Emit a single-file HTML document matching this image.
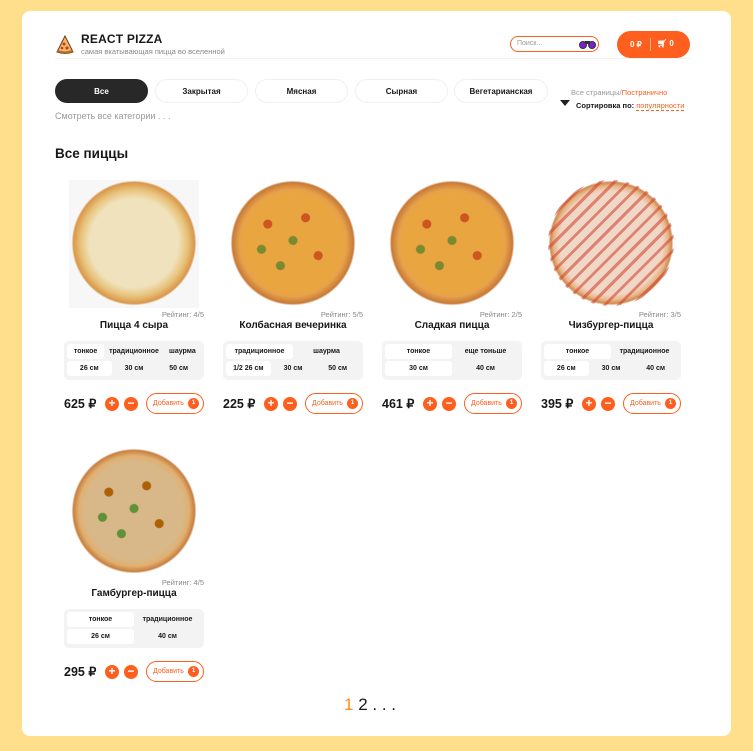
<!DOCTYPE html>
<html><head><meta charset="utf-8"><style>
*{box-sizing:border-box;margin:0;padding:0}
body{width:753px;height:751px;background:#ffdf8c;font-family:"Liberation Sans",sans-serif;position:relative;overflow:hidden;color:#181818}
.panel{position:absolute;left:22px;top:11px;width:709px;height:725px;background:#fff;border-radius:8px}
.a{position:absolute}
.cat{position:absolute;top:79px;height:24px;border:1px solid #f0f0f0;border-radius:12px;font-size:8px;font-weight:bold;display:flex;align-items:center;justify-content:center}
.card{position:absolute;width:140px}
.piz{position:absolute;left:7px;top:0;width:126px;height:126px;border-radius:50%}
.dots{background-image:radial-gradient(circle at 30% 35%,#c52 0 4px,transparent 5px),radial-gradient(circle at 60% 30%,#c52 0 4px,transparent 5px),radial-gradient(circle at 70% 60%,#c52 0 4px,transparent 5px),radial-gradient(circle at 40% 68%,#7a8a30 0 4px,transparent 5px),radial-gradient(circle at 50% 48%,#7a8a30 0 4px,transparent 5px),radial-gradient(circle at 25% 55%,#7a8a30 0 4px,transparent 5px)}
.rt{position:absolute;right:0;top:130px;font-size:7.5px;color:#888}
.nm{position:absolute;left:-10px;right:-10px;top:140px;text-align:center;font-size:10px;font-weight:bold}
.opt{position:absolute;left:0;top:161px;width:140px;height:39px;background:#f3f3f3;border-radius:5px;padding:3px}
.row{display:flex;height:15px;margin-bottom:2px}
.row div{flex:1;font-size:7px;font-weight:bold;display:flex;align-items:center;justify-content:center;border-radius:3px;white-space:nowrap}
.row .s{background:#fff}
.pr{position:absolute;left:0;top:216px;font-size:12.5px;font-weight:bold}
.pl{position:absolute;top:217px;width:14px;height:14px;border-radius:50%;background:#fe5f1e;color:#fff;font-size:12px;font-weight:bold;line-height:13px;text-align:center}
.add{position:absolute;left:82px;top:213px;width:58px;height:21px;border:1px solid #fe5f1e;border-radius:11px;font-size:7px;color:#fe5f1e;padding-left:6px;line-height:19px}
.add i{position:absolute;right:4px;top:4px;width:11px;height:11px;border-radius:50%;background:#fe5f1e;color:#fff;font-style:normal;font-size:6px;text-align:center;line-height:11px;font-weight:bold}
</style></head><body>
<div class="panel"></div>
<svg class="a" style="left:55px;top:35px" width="20" height="20" viewBox="0 0 20 20"><path d="M10 1 L2 17 Q10 20 18 17 Z" fill="#f3b95f" stroke="#6b3d1a" stroke-width="1"/><path d="M2 17 Q10 20 18 17 L17 15 Q10 18 3 15Z" fill="#b06b2c"/><circle cx="9" cy="9" r="1.5" fill="#c33"/><circle cx="12" cy="13" r="1.5" fill="#c33"/><circle cx="7" cy="13" r="1.3" fill="#c33"/></svg>
<div class="a" style="left:81px;top:32px;font-size:12px;font-weight:900;letter-spacing:0.2px">REACT PIZZA</div>
<div class="a" style="left:81px;top:47px;font-size:7.5px;color:#888">самая вкатывающая пицца во вселенной</div>
<div class="a" style="left:55px;top:58px;width:636px;height:1px;background:#f3f3f3"></div>
<div class="a" style="left:510px;top:36px;width:89px;height:16px;border:1px solid #fe5f1e;border-radius:8px;font-size:7px;color:#999;padding:3px 6px">Поиск...</div>
<svg class="a" style="left:579px;top:39px" width="17" height="10" viewBox="0 0 17 10"><circle cx="4" cy="6" r="3.5" fill="#7a1fd1" stroke="#333"/><circle cx="13" cy="6" r="3.5" fill="#7a1fd1" stroke="#333"/><rect x="6" y="2" width="5" height="3" fill="#333"/></svg>
<div class="a" style="left:617px;top:31px;width:73px;height:27px;background:#fe5f1e;border-radius:14px;color:#fff;font-size:8px;font-weight:bold"><span class="a" style="left:13px;top:9px">0 ₽</span><span class="a" style="left:33px;top:7px;width:1px;height:13px;background:#ffffff80"></span><span class="a" style="left:40px;top:8px">🛒︎ 0</span></div>
<div class="cat" style="left:55px;width:93px;background:#282828;color:#fff;border-color:#282828">Все</div>
<div class="cat" style="left:155px;width:93px">Закрытая</div>
<div class="cat" style="left:255px;width:93px">Мясная</div>
<div class="cat" style="left:355px;width:93px">Сырная</div>
<div class="cat" style="left:454px;width:94px">Вегетарианская</div>
<div class="a" style="left:55px;top:111px;font-size:9px;color:#999">Смотреть все категории . . .</div>
<div class="a" style="left:571px;top:88px;font-size:7.5px;color:#999">Все страницы/<span style="color:#fe5f1e">Постранично</span></div>
<div class="a" style="left:560px;top:100px;width:0;height:0;border-left:5px solid transparent;border-right:5px solid transparent;border-top:6px solid #222"></div>
<div class="a" style="left:576px;top:101px;font-size:7.5px;font-weight:bold">Сортировка по: <span style="color:#fe5f1e;font-weight:normal;border-bottom:1px dashed #fe5f1e">популярности</span></div>
<div class="a" style="left:55px;top:146px;font-size:13.5px;font-weight:bold">Все пиццы</div>

<div class="card" style="left:64px;top:180px">
<div class="a" style="left:5px;top:0;width:130px;height:128px;background:#f7f7f7"></div>
<div class="piz" style="background:radial-gradient(circle,#f0e2bc 0 50%,#e8c27a 60%,#d9974a 68%,#f7f7f7 70%)"></div>
<div class="rt">Рейтинг: 4/5</div><div class="nm">Пицца 4 сыра</div>
<div class="opt"><div class="row"><div class="s">тонкое</div><div style="flex:1.6">традиционное</div><div>шаурма</div></div><div class="row"><div class="s">26 см</div><div>30 см</div><div>50 см</div></div></div>
<div class="pr">625 ₽</div><div class="pl" style="left:41px">+</div><div class="pl" style="left:60px">−</div><div class="add">Добавить<i>1</i></div></div>

<div class="card" style="left:223px;top:180px">
<div class="piz" style="background:radial-gradient(circle,#e9a640 0 55%,#e8a24a 60%,#c77a38 68%,#fff 70%)"></div><div class="piz dots"></div>
<div class="rt">Рейтинг: 5/5</div><div class="nm">Колбасная вечеринка</div>
<div class="opt"><div class="row"><div class="s">традиционное</div><div>шаурма</div></div><div class="row"><div class="s">1/2 26 см</div><div>30 см</div><div>50 см</div></div></div>
<div class="pr">225 ₽</div><div class="pl" style="left:41px">+</div><div class="pl" style="left:60px">−</div><div class="add">Добавить<i>1</i></div></div>

<div class="card" style="left:382px;top:180px">
<div class="piz" style="background:radial-gradient(circle,#e9a640 0 55%,#e8a24a 60%,#c77a38 68%,#fff 70%)"></div><div class="piz dots"></div>
<div class="rt">Рейтинг: 2/5</div><div class="nm">Сладкая пицца</div>
<div class="opt"><div class="row"><div class="s">тонкое</div><div>еще тоньше</div></div><div class="row"><div class="s">30 см</div><div>40 см</div></div></div>
<div class="pr">461 ₽</div><div class="pl" style="left:41px">+</div><div class="pl" style="left:60px">−</div><div class="add">Добавить<i>1</i></div></div>

<div class="card" style="left:541px;top:180px">
<div class="piz" style="background:repeating-linear-gradient(135deg,transparent 0 7px,rgba(210,60,40,.55) 7px 10px),radial-gradient(circle,#f0d8c8 0 58%,#e8b88a 64%,#d08a50 68%,#fff 70%)"></div>
<div class="rt">Рейтинг: 3/5</div><div class="nm">Чизбургер-пицца</div>
<div class="opt"><div class="row"><div class="s">тонкое</div><div>традиционное</div></div><div class="row"><div class="s">26 см</div><div>30 см</div><div>40 см</div></div></div>
<div class="pr">395 ₽</div><div class="pl" style="left:41px">+</div><div class="pl" style="left:60px">−</div><div class="add">Добавить<i>1</i></div></div>

<div class="card" style="left:64px;top:448px">
<div class="piz" style="background:radial-gradient(circle,#d8b888 0 55%,#e0b070 62%,#c88040 68%,#fff 70%)"></div><div class="piz dots" style="filter:hue-rotate(20deg)"></div>
<div class="rt">Рейтинг: 4/5</div><div class="nm">Гамбургер-пицца</div>
<div class="opt"><div class="row"><div class="s">тонкое</div><div>традиционное</div></div><div class="row"><div class="s">26 см</div><div>40 см</div></div></div>
<div class="pr">295 ₽</div><div class="pl" style="left:41px">+</div><div class="pl" style="left:60px">−</div><div class="add">Добавить<i>1</i></div></div>

<div class="a" style="left:344px;top:695px;font-size:17px"><span style="color:#fe8a1e">1</span> 2 . . .</div>
</body></html>
